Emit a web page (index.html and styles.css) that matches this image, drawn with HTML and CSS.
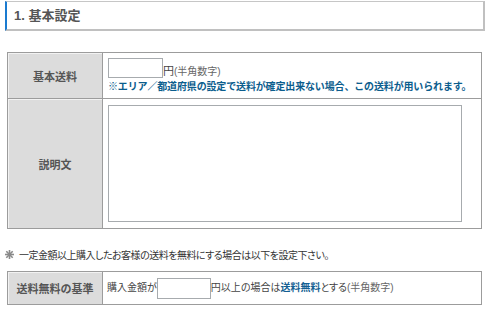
FILE: index.html
```html
<!DOCTYPE html>
<html lang="ja">
<head>
    <meta charset="UTF-8">
    <title>基本設定</title>
    <link rel="stylesheet" href="styles.css">
</head>
<body>
<div class="wrap">
    <h2 class="sec-title">1. 基本設定</h2>

    <table class="form-table first">
        <tr class="row-fee">
            <th>基本送料</th>
            <td>
                <p class="line"><input type="text" class="txt txt-fee"><span class="unit">円</span><span class="hint">(半角数字)</span></p>
                <p class="notice">※エリア／都道府県の設定で送料が確定出来ない場合、この送料が用いられます。</p>
            </td>
        </tr>
        <tr class="row-desc">
            <th>説明文</th>
            <td><textarea class="area"></textarea></td>
        </tr>
    </table>

    <p class="memo">
        <svg class="mark" width="9" height="9" viewBox="0 0 9 9">
            <g stroke="#8a8a8a" stroke-width="1.6">
                <line x1="4.5" y1="0" x2="4.5" y2="9"/>
                <line x1="0" y1="4.5" x2="9" y2="4.5"/>
                <line x1="1.3" y1="1.3" x2="7.7" y2="7.7"/>
                <line x1="7.7" y1="1.3" x2="1.3" y2="7.7"/>
            </g>
        </svg>
        一定金額以上購入したお客様の送料を無料にする場合は以下を設定下さい。
    </p>

    <table class="form-table second">
        <tr class="row-free">
            <th>送料無料の基準</th>
            <td>購入金額が<input type="text" class="txt txt-free">円以上の場合は<strong class="em">送料無料</strong>とする<span class="hint">(半角数字)</span></td>
        </tr>
    </table>
</div>
</body>
</html>
```

FILE: styles.css
```css
* {
    margin: 0;
    padding: 0;
}

body {
    font-family: "Liberation Sans", "Noto Sans CJK JP", sans-serif;
    font-size: 10px;
    color: #444;
    background: #fff;
}

.wrap {
    width: 480px;
    padding: 1px 5px 0 5px;
}

.sec-title {
    height: 27px;
    line-height: 27px;
    padding-left: 7px;
    border-top: 1px solid #c6c6c6;
    border-right: 2px solid #c0c0c0;
    border-bottom: 2px solid #c0c0c0;
    border-left: 2px solid #1a7bd0;
    font-size: 13px;
    font-weight: bold;
    color: #555;
}

.form-table {
    width: 475px;
    margin-left: 2px;
    border-collapse: collapse;
    border: 1px solid #9c9c9c;
}

.form-table th,
.form-table td {
    border: 1px solid #9c9c9c;
}

.form-table th {
    width: 94px;
    padding: 0;
    background: #dcdcdc;
    box-shadow: inset 1px 1px 0 #f2f2f2;
    font-size: 11px;
    font-weight: bold;
    color: #555;
    text-align: center;
    vertical-align: middle;
}

.form-table td {
    padding: 0 0 0 5px;
    vertical-align: top;
}

.first {
    margin-top: 21px;
}

.row-fee {
    height: 46px;
}

.row-fee td {
    padding-top: 5px;
}

.line {
    display: flex;
    align-items: flex-end;
    height: 20px;
}

.txt {
    border: 1px solid #a7abae;
    background: #fff;
    font: inherit;
    outline: none;
}

.txt-fee {
    width: 55px;
    height: 20px;
    box-sizing: border-box;
}

.unit {
    font-size: 11px;
    color: #444;
    line-height: 13px;
}

.hint {
    color: #666;
    font-feature-settings: "palt";
}

.line .hint {
    line-height: 13px;
}

.notice {
    margin-top: 2px;
    font-weight: bold;
    color: #0b5d8d;
    line-height: 14px;
    letter-spacing: -0.15px;
}

.row-desc {
    height: 130px;
}

.row-desc td {
    padding-top: 6px;
}

.area {
    display: block;
    width: 354px;
    height: 117px;
    box-sizing: border-box;
    border: 1px solid #a7abae;
    resize: none;
    outline: none;
}

.memo {
    display: flex;
    align-items: center;
    gap: 5px;
    margin: 18px 0 0 0;
    height: 14px;
    color: #333;
    letter-spacing: -0.5px;
    font-feature-settings: "palt";
}

.second {
    margin-top: 10px;
}

.row-free {
    height: 33px;
}

.row-free th {
    font-feature-settings: "palt";
}

.row-free td {
    padding-left: 4px;
    vertical-align: middle;
    font-feature-settings: "palt";
}

.txt-free {
    width: 54px;
    height: 21px;
    box-sizing: border-box;
    vertical-align: middle;
}

.em {
    color: #135f92;
}
```
